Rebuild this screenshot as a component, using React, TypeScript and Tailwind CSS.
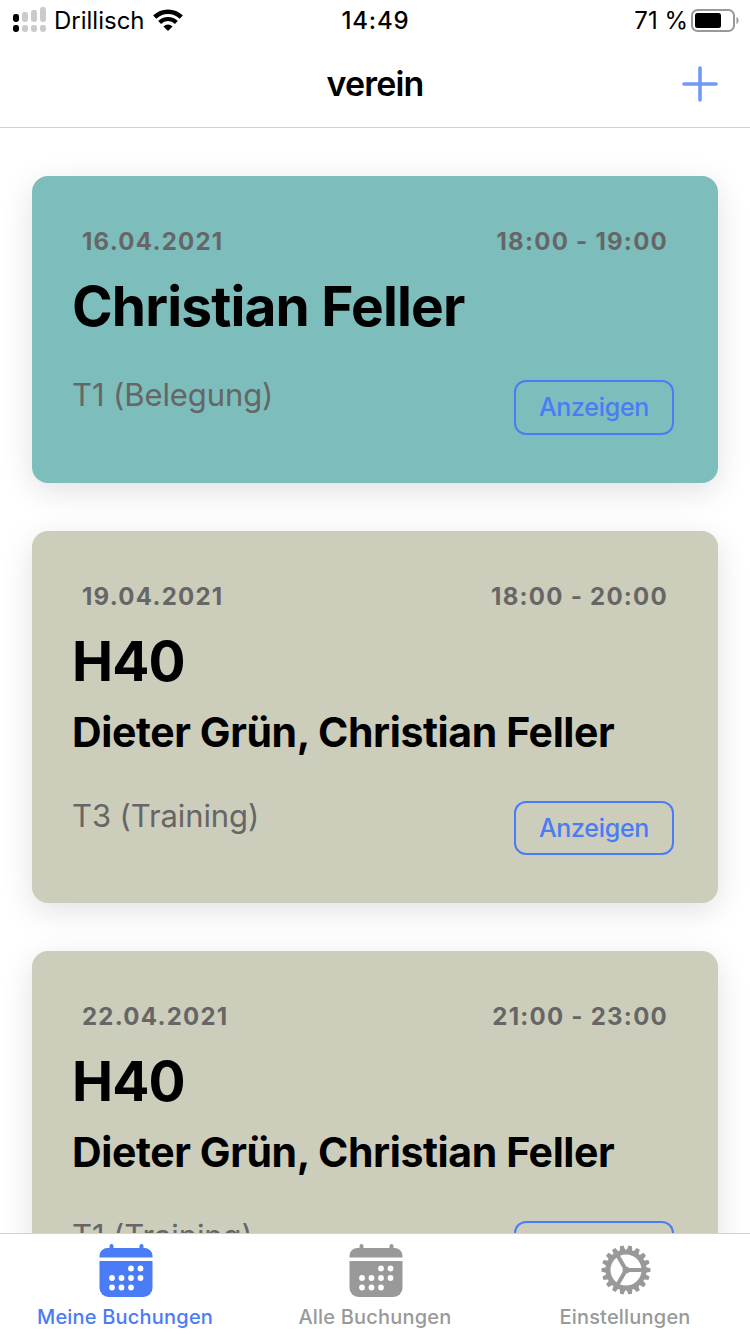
import React from "react";
import clsx from "clsx";

interface Booking {
  id: number;
  date: string;
  time: string;
  title: string;
  players?: string;
  place: string;
  color: string;
}

const bookings: Booking[] = [
  { id: 1, date: '16.04.2021', time: '18:00 - 19:00', title: 'Christian Feller', place: 'T1 (Belegung)', color: 'bg-[#7dbdbc]' },
  { id: 2, date: '19.04.2021', time: '18:00 - 20:00', title: 'H40', players: 'Dieter Grün, Christian Feller', place: 'T3 (Training)', color: 'bg-[#cdcdbb]' },
  { id: 3, date: '22.04.2021', time: '21:00 - 23:00', title: 'H40', players: 'Dieter Grün, Christian Feller', place: 'T1 (Training)', color: 'bg-[#cdcdbb]' },
];

function SignalIcon() {
  const bars = [
    { x: 0, y: 7, h: 8 },
    { x: 9, y: 5, h: 10 },
    { x: 18, y: 3, h: 12 },
    { x: 27, y: 0, h: 15 },
  ];
  return (
    <svg width="33" height="25" viewBox="0 0 33 25" className="relative -top-[2px]">
      {bars.map((b, i) => (
        <g key={b.x} fill={i === 0 ? '#000' : '#cbcbcb'}>
          <rect x={b.x} y={b.y} width="6" height={b.h} rx="2.4" />
          <rect x={b.x} y="18" width="6" height="7" rx="2.4" />
        </g>
      ))}
    </svg>
  );
}

function WifiIcon() {
  return (
    <svg width="30" height="22" viewBox="0 0 30 22" fill="none" stroke="#000" className="relative -top-px">
      <path d="M1.7 8.2a19 19 0 0 1 26.6 0" strokeWidth="4.6" />
      <path d="M6.6 13.5a12 12 0 0 1 16.8 0" strokeWidth="4.1" />
      <path d="M15 22l-4.6-4.6a6.5 6.5 0 0 1 9.2 0z" fill="#000" stroke="none" />
    </svg>
  );
}

function BatteryIcon() {
  return (
    <svg width="48" height="23" viewBox="0 0 48 23" className="relative -top-px">
      <rect x="1" y="1" width="42" height="21" rx="5.5" fill="none" stroke="#999" strokeWidth="2" />
      <rect x="4" y="4" width="26" height="15" rx="2.5" fill="#000" />
      <path d="M45.5 8c1.3.6 2 1.8 2 3.5s-.7 2.9-2 3.5z" fill="#999" />
    </svg>
  );
}

function CalendarIcon() {
  const dots = [
    [31.5, 24.5], [41, 24.5],
    [12.5, 34], [22, 34], [31.5, 34], [41, 34],
    [12.5, 43.5], [22, 43.5], [31.5, 43.5],
  ];
  return (
    <svg width="54" height="53" viewBox="0 0 53 53" fill="currentColor" className="relative left-px">
      <path d="M0 13.5V12a8 8 0 0 1 8-8h2V2a2 2 0 0 1 4 0v2h26V2a2 2 0 0 1 4 0v2h1a8 8 0 0 1 8 8v1.5z" />
      <path d="M0 17h53v27a9 9 0 0 1-9 9H9a9 9 0 0 1-9-9z" />
      {dots.map(([x, y]) => (
        <circle key={`${x}-${y}`} cx={x} cy={y} r="2.9" fill="#fff" />
      ))}
    </svg>
  );
}

function GearIcon() {
  const teeth = Array.from({ length: 18 }, (_, i) => i * 20);
  return (
    <svg width="50" height="50" viewBox="-25 -25 50 50" fill="currentColor" className="relative left-px">
      {teeth.map((a) => (
        <path key={a} d="M-3 -19L-1.8 -24.5h3.6L3 -19z" transform={`rotate(${a + 10})`} />
      ))}
      <circle r="18" fill="none" stroke="currentColor" strokeWidth="5" />
      {[0, 120, 240].map((a) => (
        <path key={a} d="M0 0H17" stroke="currentColor" strokeWidth="4" transform={`rotate(${a})`} />
      ))}
      <circle r="3.5" />
    </svg>
  );
}

function BookingCard({ booking }: { booking: Booking }) {
  return (
    <article className={clsx('shrink-0 rounded-2xl px-10 pt-12 pb-12 shadow-[0_8px_32px_rgba(0,0,0,0.12)]', booking.color)}>
      <div className="flex h-9 items-center justify-between pr-[10px] pl-[10px] text-[24px] font-bold tracking-[1.25px] text-[#666]">
        <span>{booking.date}</span>
        <span>{booking.time}</span>
      </div>
      <h2 className="h-[81px] text-[55px] leading-[92px] font-bold tracking-[-0.85px] whitespace-nowrap">{booking.title}</h2>
      {booking.players && (
        <h3 className="h-[66px] text-[41px] leading-[73px] font-bold tracking-[-0.4px] whitespace-nowrap">{booking.players}</h3>
      )}
      <div className="mt-[39px] flex items-start justify-between pr-1">
        <span className="text-[31px] leading-[29px] tracking-[-0.1px] text-[#666]">{booking.place}</span>
        <button className="h-[54.5px] w-40 rounded-xl border-2 border-[#4a7cf6] pt-px text-[25px] font-medium tracking-[-0.3px] text-[#4a7cf6]">Anzeigen</button>
      </div>
    </article>
  );
}

export default function App() {
  return (
    <div className="flex h-[1334px] w-[750px] flex-col overflow-hidden bg-white font-['Inter',sans-serif] text-black">
      <header className="h-32 shrink-0 border-b border-[#d2d2d2]">
        <div className="grid h-[42px] grid-cols-3 items-center pr-[11px] pl-[13px] text-[24px]">
          <div className="flex items-center gap-2">
            <SignalIcon />
            <span>Drillisch</span>
            <WifiIcon />
          </div>
          <span className="pr-px text-center font-medium tracking-[0.8px]">14:49</span>
          <div className="flex items-center justify-end gap-[3px]">
            <span>71 %</span>
            <BatteryIcon />
          </div>
        </div>
        <div className="grid h-[84px] grid-cols-[1fr_auto_1fr] items-center px-8">
          <h1 className="col-start-2 pb-[2px] text-[34px] font-semibold tracking-[-0.8px]">verein</h1>
          <button className="justify-self-end text-[#7199f8]">
            <svg width="36" height="36" viewBox="0 0 36 36" stroke="currentColor" strokeWidth="3.6" strokeLinecap="round">
              <path d="M18 2v32M2 18h32" />
            </svg>
          </button>
        </div>
      </header>

      <main className="flex flex-1 flex-col gap-12 overflow-hidden px-8 pt-12">
        {bookings.map((b) => (
          <BookingCard key={b.id} booking={b} />
        ))}
      </main>

      <nav className="grid h-[101px] shrink-0 grid-cols-3 border-t border-[#d2d2d2] bg-white text-[20px] font-medium tracking-[0.2px] text-[#999]">
        <button className="flex flex-col items-center pt-[10px] text-[#4a7cf6]">
          <CalendarIcon />
          <span className="mt-[5px]">Meine Buchungen</span>
        </button>
        <button className="flex flex-col items-center pt-[10px]">
          <CalendarIcon />
          <span className="mt-[5px]">Alle Buchungen</span>
        </button>
        <button className="flex flex-col items-center pt-[11px]">
          <GearIcon />
          <span className="mt-[7px]">Einstellungen</span>
        </button>
      </nav>
    </div>
  );
}
